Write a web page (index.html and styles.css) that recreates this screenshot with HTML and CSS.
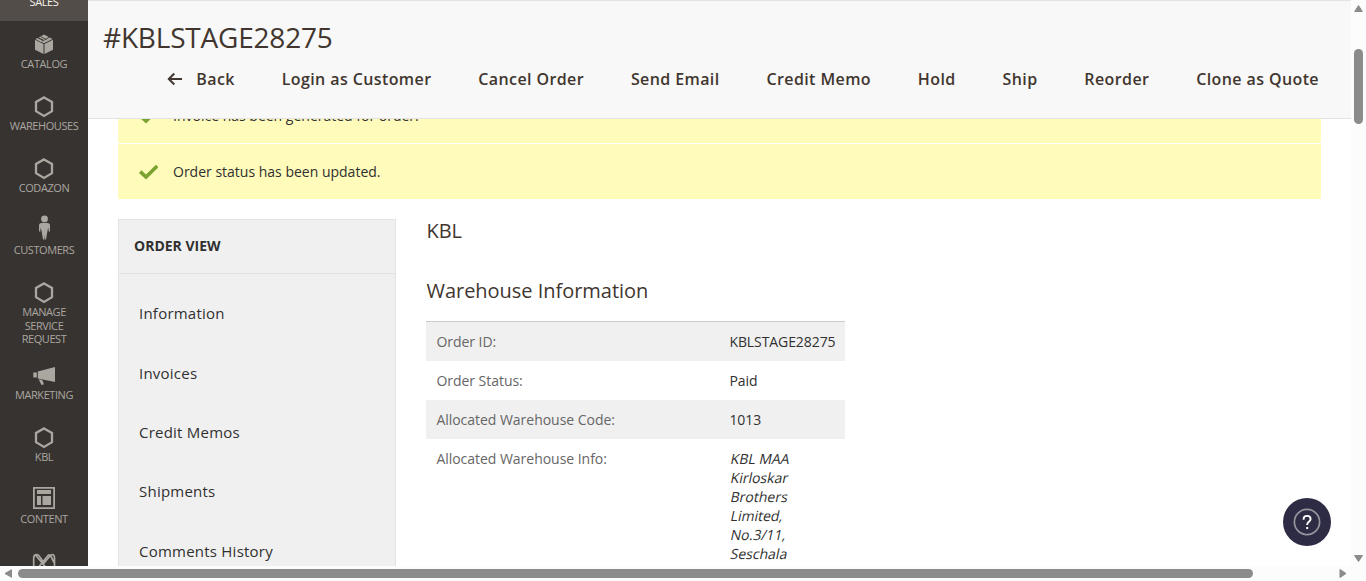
FILE: index.html
```html
<!DOCTYPE html>
<html lang="en">
<head>
<meta charset="utf-8">
<title>#KBLSTAGE28275</title>
<link rel="stylesheet" href="styles.css">
</head>
<body>
<svg class="defs" width="0" height="0">
  <symbol id="hex" viewBox="0 0 24 24"><path d="M12 3.400 20 7.900v9.300l-8 4.700-8-4.700V7.900z" fill="none" stroke="currentColor" stroke-width="2.300"/></symbol>
</svg>
<div class="window">
  <div class="viewport">
    <nav class="menu">
      <div class="menu-item active"><span>Sales</span></div>
      <div class="menu-item"><svg viewBox="0 0 24 24"><path d="M3 7.800 11.500 12v10L3 17.800zM21 7.800 12.500 12v10L21 17.800zM12 11.200 9.300 9.900 17.600 5.600 20.600 7.100zM3.400 7.100 5.500 6.100 11 8.900 8.800 9.900zM6.600 5.500 12 2.600 16.800 4.900 12 7.900z" fill="currentColor"/><path d="m8.600 4.600 6 3.100" stroke="#373330" stroke-width=".8"/></svg><span>Catalog</span></div>
      <div class="menu-item"><svg><use href="#hex"/></svg><span>Warehouses</span></div>
      <div class="menu-item"><svg><use href="#hex"/></svg><span>Codazon</span></div>
      <div class="menu-item"><svg class="person" viewBox="0 0 24 24"><circle cx="12.500" cy="2.900" r="3.400" fill="currentColor"/><path d="M9.500 7h6q2.500 0 2.500 2.500V15l-1.100 1-.7-4.500-1.200 6-1 6h-1.200l-.3-4.500-.3 4.500H11l-1-6-1.200-6-.7 4.500L7 15V9.500Q7 7 9.500 7z" fill="currentColor"/></svg><span>Customers</span></div>
      <div class="menu-item tall"><svg><use href="#hex"/></svg><span>Manage<br>Service<br>Request</span></div>
      <div class="menu-item"><svg viewBox="0 0 24 24"><path d="M1.300 9.400h3.500v5H1.300zM5.800 8.500 23 4v15L5.800 15.400zM6.600 16.200l3.600.7 1.800 4.300-2.500.9z" fill="currentColor"/></svg><span>Marketing</span></div>
      <div class="menu-item"><svg><use href="#hex"/></svg><span>KBL</span></div>
      <div class="menu-item"><svg class="layout" viewBox="0 0 24 24"><path d="M1 1h22v22H1zM2.800 2.800v18.400h18.400V2.800z" fill-rule="evenodd" fill="currentColor"/><path d="M5 4h14v4H5zM5 10h4v9H5zM10.500 10H19v9h-8.500z" fill="currentColor"/></svg><span>Content</span></div>
      <div class="menu-item"><svg viewBox="0 0 24 24"><path d="M1.700 20V9q0-3.500 3-3.500 1.500 0 2.800 2L12 14l6-7q1.800-2 3.500-1 1 .7 1 3v11M5 20 16 6.500q2-1.500 3 1l3 6M3.500 6l10 12" fill="none" stroke="currentColor" stroke-width="1.700"/></svg></div>
    </nav>
    <div class="page">
      <header class="page-header">
        <h1>#KBLSTAGE28275</h1>
        <div class="actions">
          <button class="back"><svg viewBox="0 0 16 14"><path d="M15 7H2M7.300 1.500 1.800 7l5.500 5.500" fill="none" stroke="currentColor" stroke-width="2"/></svg>Back</button>
          <button>Login as Customer</button>
          <button>Cancel Order</button>
          <button>Send Email</button>
          <button>Credit Memo</button>
          <button>Hold</button>
          <button>Ship</button>
          <button>Reorder</button>
          <button>Clone as Quote</button>
        </div>
      </header>
      <main class="content">
        <div class="messages">
          <div class="message"><svg viewBox="0 0 20 16"><path d="m2.200 7.600 5.800 5.500L19.200 2" fill="none" stroke="currentColor" stroke-width="3.600"/></svg>Invoice has been generated for order.</div>
          <div class="message"><svg viewBox="0 0 20 16"><path d="m2.200 7.600 5.800 5.500L19.200 2" fill="none" stroke="currentColor" stroke-width="3.600"/></svg>Order status has been updated.</div>
        </div>
        <div class="columns">
          <aside class="tabs">
            <h2>ORDER VIEW</h2>
            <ul>
              <li>Information</li>
              <li>Invoices</li>
              <li>Credit Memos</li>
              <li>Shipments</li>
              <li>Comments History</li>
            </ul>
          </aside>
          <section class="details">
            <h3 class="store">KBL</h3>
            <h3>Warehouse Information</h3>
            <dl>
              <div class="row"><dt>Order ID:</dt><dd>KBLSTAGE28275</dd></div>
              <div class="row"><dt>Order Status:</dt><dd>Paid</dd></div>
              <div class="row"><dt>Allocated Warehouse Code:</dt><dd>1013</dd></div>
              <div class="row"><dt>Allocated Warehouse Info:</dt><dd class="address"><span>KBL MAA</span><span>Kirloskar</span><span>Brothers</span><span>Limited,</span><span>No.3/11,</span><span>Seschala</span></dd></div>
            </dl>
          </section>
        </div>
      </main>
    </div>
    <button class="help" aria-label="Help"><svg viewBox="0 0 48 48"><circle cx="24" cy="24" r="12.600" fill="none" stroke="#96959f" stroke-width="1.700"/><path d="M20.600 21.700v-.4q0-3.400 3.500-3.400t3.500 3.200c0 2.700-3.400 2.700-3.400 5.400v.5" fill="none" stroke="#fff" stroke-width="1.900"/><path d="M23.200 29h2v2.100h-2z" fill="#fff"/></svg></button>
  </div>
  <div class="vbar"><svg viewBox="0 0 15 566"><path d="M7.500 5.500 11.300 11.500H3.700zM3.500 555.500h8l-4 6z" stroke="#8b8b8b" stroke-linejoin="round" fill="#8b8b8b"/><rect x="3" y="49" width="9" height="75" rx="4.500" fill="#8b8b8b"/></svg></div>
  <div class="hbar"><svg viewBox="0 0 1366 15"><path d="M11.500 3.700v7.600L5 7.500zM1340 3.500v8l6-4z" stroke="#8b8b8b" stroke-linejoin="round" fill="#8b8b8b"/><rect x="18" y="3" width="1235" height="9" rx="4.500" fill="#8b8b8b"/></svg></div>
</div>
</body>
</html>
```
FILE: styles.css
```css
* { box-sizing: border-box; }
body { margin: 0; font: 14px/19px "Open Sans", sans-serif; color: #303030; background: #fff; overflow: hidden; }
h1, h2, h3, ul, dl, dd { margin: 0; padding: 0; }
button { border: 0; background: none; padding: 0; color: inherit; font: inherit; letter-spacing: inherit; }
svg { display: block; flex: none; }
.defs { position: absolute; }
.window { display: grid; grid-template: 566px 15px / 1351px 15px; height: 581px; }
.viewport { display: flex; overflow: hidden; position: relative; }
.vbar, .hbar { background: #fcfcfc; }
.vbar svg { width: 15px; height: 566px; }
.hbar { grid-column: 1 / 3; }
.hbar svg { width: 1366px; height: 15px; }

.menu { width: 88px; flex: none; height: 566px; overflow: hidden; background: #373330; color: #aaa6a0; }
.menu-item { height: 62px; padding-top: 11px; display: flex; flex-direction: column; align-items: center; gap: 1px; font-size: 11px; line-height: 13.5px; letter-spacing: -.42px; text-align: center; text-transform: uppercase; }
.menu-item svg { width: 24px; height: 24px; }
.menu-item .person { overflow: visible; margin: -2px 0 2px; }
.menu-item .layout { margin: -1px 0 1px; }
.menu-item.tall { height: 83px; }
.menu-item.active { height: 21px; padding: 0; background: #524d49; color: #f7f3eb; }
.menu-item.active span { margin-top: -5px; }

.page { flex: 1; min-width: 0; }
.page-header { position: relative; z-index: 1; height: 119px; background: #f8f8f8; border-top: 1px solid #e3e3e3; border-bottom: 1px solid #e3e3e3; padding: 17px 32px 0 15px; color: #41362f; }
h1 { font-size: 28px; line-height: 38px; font-weight: 400; letter-spacing: -.2px; }
.actions { display: flex; justify-content: flex-end; gap: 46.85px; margin-top: 12px; font-size: 16px; line-height: 22px; font-weight: 600; letter-spacing: .4px; white-space: nowrap; }
.actions button { display: flex; align-items: center; }
.back svg { width: 16px; height: 14px; margin-right: 13px; }

.content { padding: 0 30px; }
.messages { margin-top: -31px; }
.message { height: 55px; margin-bottom: 1px; padding-left: 20px; display: flex; align-items: center; gap: 15px; background: #fffbbb; }
.message svg { width: 20px; height: 16px; color: #79a22e; }
.columns { display: flex; gap: 30px; margin-top: 20px; }
.tabs { width: 278px; height: 400px; flex: none; background: #f0f0f0; border: 1px solid #e3e3e3; }
.tabs h2 { height: 54px; padding: 16px 15px; border-bottom: 1px solid #e3e3e3; font-size: 14px; line-height: 19px; font-weight: 700; }
.tabs ul { list-style: none; padding: 10px 20px; }
.tabs li { height: 59.4px; display: flex; align-items: center; font-size: 15px; letter-spacing: .23px; }
.details h3 { font-size: 20px; line-height: 28px; font-weight: 400; color: #41362f; padding-left: .5px; letter-spacing: -.03px; }
.details .store { margin: -2px 0 32px; }
dl { width: 419px; margin-top: 16px; border-top: 1px solid #ccc; }
.row { display: grid; grid-template-columns: 293px 1fr; padding: 10px 9.600px 10px 10.400px; min-height: 39px; }
.row:nth-child(odd) { background: #f0f0f0; }
dt { color: #666; letter-spacing: -.03px; }
dd { letter-spacing: -.08px; }
.address { padding-left: 1.500px; }
.address span { display: block; transform: skewX(-12deg); letter-spacing: 0; }

.help { position: absolute; left: 1283px; top: 498px; width: 48px; height: 48px; border-radius: 50%; background: #2d2c44; }
```
